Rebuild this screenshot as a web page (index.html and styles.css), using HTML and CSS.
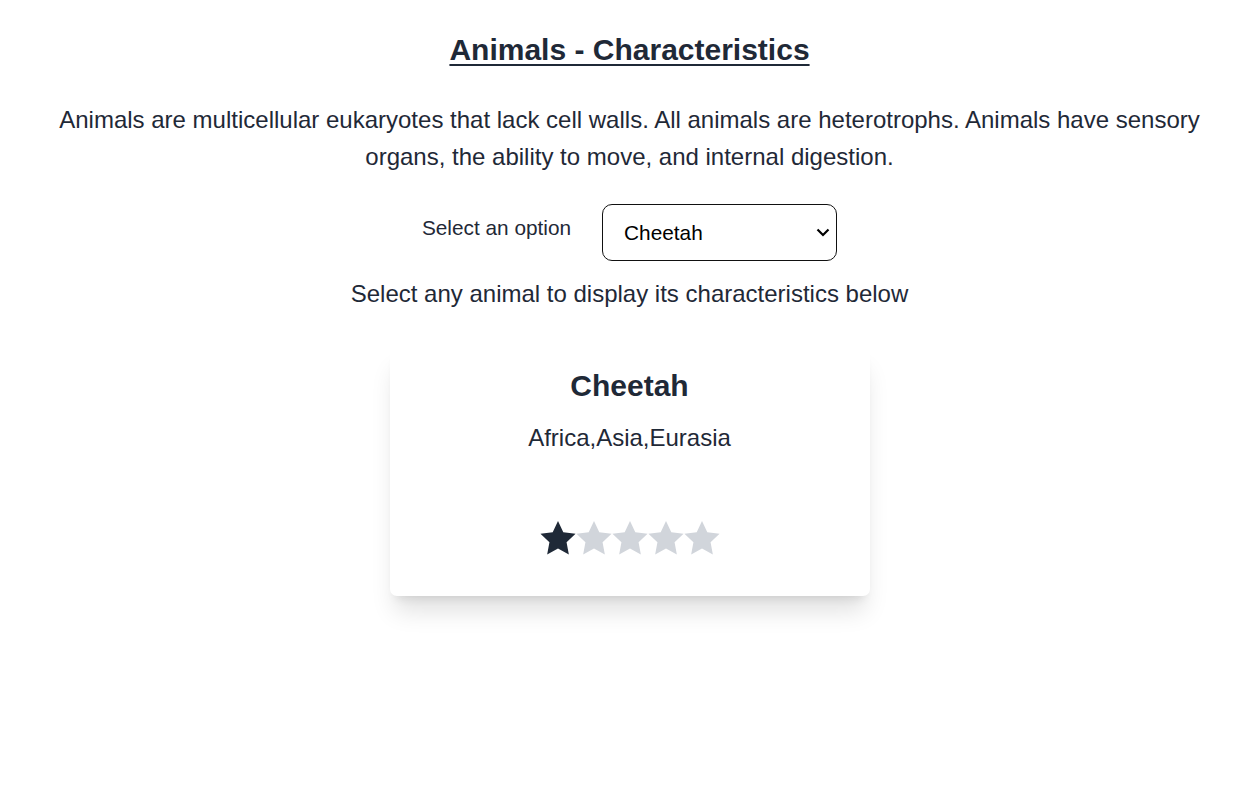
FILE: index.html
```html
<!DOCTYPE html>
<html>
<head>
<meta charset="utf-8">
<link rel="stylesheet" href="styles.css">
</head>
<body>
<main class="page">
  <h1 class="title">Animals - Characteristics</h1>
  <p class="intro">Animals are multicellular eukaryotes that lack cell walls. All animals are heterotrophs. Animals have sensory organs, the ability to move, and internal digestion.</p>
  <div class="picker">
    <label class="picker-label" for="animal">Select an option</label>
    <select id="animal" class="picker-select">
      <option>Cheetah</option>
      <option>Lion</option>
      <option>Elephant</option>
    </select>
  </div>
  <p class="hint">Select any animal to display its characteristics below</p>
  <section class="card">
    <h2 class="card-title">Cheetah</h2>
    <p class="card-region">Africa,Asia,Eurasia</p>
    <div class="stars">
      <svg class="star on" viewBox="0 0 24 24"><path d="M12 0.7L15.53 8.15L23.7 9.2L17.71 14.85L19.23 22.95L12 19L4.77 22.95L6.29 14.85L0.3 9.2L8.47 8.15Z"/></svg>
      <svg class="star" viewBox="0 0 24 24"><path d="M12 0.7L15.53 8.15L23.7 9.2L17.71 14.85L19.23 22.95L12 19L4.77 22.95L6.29 14.85L0.3 9.2L8.47 8.15Z"/></svg>
      <svg class="star" viewBox="0 0 24 24"><path d="M12 0.7L15.53 8.15L23.7 9.2L17.71 14.85L19.23 22.95L12 19L4.77 22.95L6.29 14.85L0.3 9.2L8.47 8.15Z"/></svg>
      <svg class="star" viewBox="0 0 24 24"><path d="M12 0.7L15.53 8.15L23.7 9.2L17.71 14.85L19.23 22.95L12 19L4.77 22.95L6.29 14.85L0.3 9.2L8.47 8.15Z"/></svg>
      <svg class="star" viewBox="0 0 24 24"><path d="M12 0.7L15.53 8.15L23.7 9.2L17.71 14.85L19.23 22.95L12 19L4.77 22.95L6.29 14.85L0.3 9.2L8.47 8.15Z"/></svg>
    </div>
  </section>
</main>
</body>
</html>
```
FILE: styles.css
```css
html, body {
  margin: 0;
  padding: 0;
  background: #ffffff;
}
body {
  font-family: "Liberation Sans", Arial, sans-serif;
  color: #1f2937;
}
.page {
  display: flex;
  flex-direction: column;
  align-items: center;
  padding: 32px 48px 40px 56px;
  text-align: center;
}
.title {
  margin: 0;
  font-size: 30px;
  line-height: 36px;
  font-weight: 700;
  text-decoration: underline;
  text-decoration-thickness: 2px;
  text-underline-offset: 4px;
}
.intro {
  margin: 33px 0 0;
  font-size: 24px;
  line-height: 37px;
}
.picker {
  display: flex;
  align-items: center;
  gap: 31px;
  margin-top: 29px;
}
.picker-label {
  font-size: 20.8px;
  margin-top: -10px;
}
.picker-select {
  appearance: none;
  -webkit-appearance: none;
  width: 235px;
  height: 57px;
  padding: 0 36px 0 21px;
  border: 1px solid #111111;
  border-radius: 10px;
  background-color: #ffffff;
  background-image: url("data:image/svg+xml;utf8,<svg xmlns='http://www.w3.org/2000/svg' width='14' height='9' viewBox='0 0 14 9'><path d='M1.5 1.5l5.5 5.5 5.5-5.5' fill='none' stroke='black' stroke-width='2.2'/></svg>");
  background-repeat: no-repeat;
  background-position: right 6px center;
  font-family: "Liberation Sans", Arial, sans-serif;
  font-size: 20.8px;
  color: #000000;
}
.hint {
  margin: 17px 0 0;
  font-size: 24px;
  line-height: 32px;
}
.card {
  width: 480px;
  height: 250px;
  margin-top: 36px;
  padding-top: 22px;
  box-sizing: border-box;
  background: #ffffff;
  border-radius: 7px;
  box-shadow: 0 20px 25px -5px rgba(0,0,0,0.12), 0 8px 10px -6px rgba(0,0,0,0.1);
  display: flex;
  flex-direction: column;
  align-items: center;
}
.card-title {
  margin: 0;
  font-size: 30px;
  line-height: 36px;
  font-weight: 700;
}
.card-region {
  margin: 18px 0 0;
  font-size: 24px;
  line-height: 32px;
}
.stars {
  display: flex;
  margin-top: 66px;
}
.star {
  width: 36px;
  height: 36px;
  fill: #d1d5db;
}
.star.on {
  fill: #1f2937;
}
```
